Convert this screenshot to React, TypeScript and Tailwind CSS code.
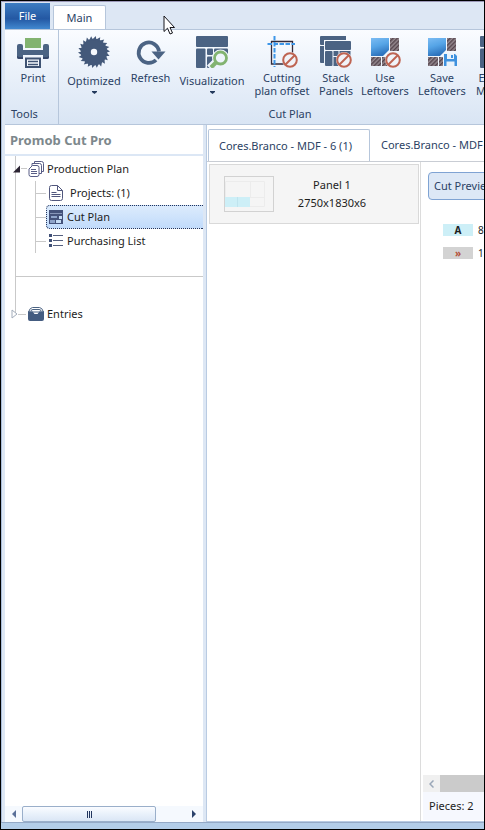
import type { ReactNode } from 'react';
import clsx from 'clsx';

interface RibbonButtonProps {
  icon: ReactNode;
  lines: string[];
  className: string;
  tall?: boolean;
  menu?: boolean;
}

function RibbonButton({ icon, lines, className, tall, menu }: RibbonButtonProps) {
  return (
    <button
      type="button"
      className={clsx('flex shrink-0 flex-col items-center pt-1.5 text-[#2b4264]', className)}
    >
      {icon}
      <span
        className={clsx(
          'flex flex-col items-center whitespace-nowrap leading-[13px]',
          tall ? 'mt-1.5' : 'mt-[3px]',
        )}
      >
        {lines.map((line) => (
          <span key={line}>{line}</span>
        ))}
      </span>
      {menu && (
        <svg className="mt-1 h-[3px] w-[5px]" viewBox="0 0 5 3" aria-hidden="true">
          <path d="M0 0h5v1L2.5 3 0 1z" fill="#22395c" />
        </svg>
      )}
    </button>
  );
}

/* Ribbon icons, all on a 32px canvas */

function PrintIcon() {
  return (
    <svg className="size-8" viewBox="0 0 32 32" aria-hidden="true">
      <path d="M8 2h16v10H8z" fill="#82b370" />
      <path
        d="M2 8h2q2 0 2 2v4h20v-4q0-2 2-2h2q2 0 2 2v11q0 2-2 2h-4v-4H6v4H2q-2 0-2-2V10q0-2 2-2z"
        fill="#4b6383"
      />
      <path d="M0 20v1q0 2 2 2h4v-2H2zM32 20v1q0 2-2 2h-4v-2h4z" fill="#36476a" />
      <path d="M6 20h20v4h-1v-3H7v3H6z" fill="#edf3fb" />
      <path d="M9 22.5h14V31H9z" fill="#f6f9fd" stroke="#3f5373" strokeWidth="2" />
      <path d="M11 25.5h10M11 28.5h10" stroke="#3f5373" strokeWidth="1.3" />
    </svg>
  );
}

const TEETH = Array.from({ length: 22 }, (_, i) => (i * 360) / 22);

function SawIcon() {
  return (
    <svg className="size-8" viewBox="0 0 32 32" aria-hidden="true">
      <circle cx="16" cy="16" r="13.2" fill="#44597a" />
      {TEETH.map((angle) => (
        <path
          key={angle}
          d="M13.5 4.5L17.8 0l.7 4.5z"
          fill="#44597a"
          transform={`rotate(${angle} 16 16)`}
        />
      ))}
      <circle cx="16" cy="16" r="3.2" fill="#f6f9fd" />
    </svg>
  );
}

function RefreshIcon() {
  return (
    <svg className="size-8" viewBox="0 0 32 32" aria-hidden="true">
      <path
        d="M21 24A10.2 10.2 0 1 1 24 15.5"
        fill="none"
        stroke="#4b6383"
        strokeWidth="3.8"
      />
      <path d="M16.5 15.5H30.500L23.500 23.500z" fill="#4b6383" />
    </svg>
  );
}

function VisualizationIcon() {
  return (
    <svg className="size-8" viewBox="0 0 32 32" aria-hidden="true">
      <g fill="#4b6383">
        <rect width="32" height="11" rx="1" />
        <rect y="12.5" width="9.5" height="19.5" rx="1" />
        <rect x="11" y="12.5" width="6" height="6.5" rx="1" />
        <rect x="18" y="12.5" width="14" height="7" rx="1" />
        <rect x="11" y="20.5" width="8" height="11.5" rx="1" />
      </g>
      <path d="M20 25.5L13.5 32" stroke="#eef4fb" strokeWidth="7" />
      <circle cx="24.5" cy="22" r="8.5" fill="#eef4fb" />
      <circle cx="24.5" cy="22" r="6" fill="#eef4fb" stroke="#82b370" strokeWidth="2.8" />
      <path d="M20.5 26L15 31.5" stroke="#82b370" strokeWidth="4" />
    </svg>
  );
}

function Forbidden() {
  return (
    <>
      <circle cx="24" cy="24" r="8" fill="#f1f5fb" />
      <circle cx="24" cy="24" r="6.8" fill="#f1f3f8" stroke="#be6452" strokeWidth="2" />
      <path d="M19.5 28.5l9-9" stroke="#be6452" strokeWidth="2" />
    </>
  );
}

function OffsetIcon() {
  return (
    <svg className="size-8" viewBox="0 0 32 32" aria-hidden="true">
      <path d="M5 5.5h21.5V28h-21V5" fill="none" stroke="#342b3a" strokeWidth="1.3" />
      <path
        d="M1.5 8H29M8.5 0v31"
        fill="none"
        stroke="#3d96e8"
        strokeWidth="2"
        strokeDasharray="4.5 1.5"
      />
      <Forbidden />
    </svg>
  );
}

function StackIcon() {
  return (
    <svg className="size-8" viewBox="0 0 32 32" aria-hidden="true">
      <g fill="#4b6383">
        <path d="M1 0h25v4H4v5H1q-1 0-1-1V1q0-1 1-1z" />
        <rect x="5" y="5" width="26" height="9" rx="1" />
        <path d="M0 10h4v17H1q-1 0-1-1z" />
        <rect x="5" y="15" width="7.5" height="15" rx="1" />
        <rect x="13.5" y="15" width="5" height="5" />
        <rect x="19.5" y="15" width="11" height="5" />
        <rect x="13.5" y="21" width="5" height="9" />
      </g>
      <Forbidden />
    </svg>
  );
}

interface PanelPartsProps {
  id: string;
}

function PanelParts({ id }: PanelPartsProps) {
  return (
    <>
      <defs>
        <linearGradient id={`${id}-blue`} x1="0" y1="0" x2="0.3" y2="1">
          <stop offset="0" stopColor="#7cbcf3" />
          <stop offset="0.5" stopColor="#55a4e6" />
          <stop offset="1" stopColor="#2e73bd" />
        </linearGradient>
        <pattern
          id={`${id}-hatch`}
          width="3"
          height="3"
          patternUnits="userSpaceOnUse"
          patternTransform="rotate(45)"
        >
          <rect width="3" height="3" fill="#94888e" />
          <rect width="1.4" height="3" fill="#54434b" />
        </pattern>
      </defs>
      <path d="M2 2h18v12l-6 6H2z" fill={`url(#${id}-blue)`} />
      <path d="M21 2h9v13h-9zM2 21h10v9H2zM13 21h8v9h-8z" fill={`url(#${id}-hatch)`} />
    </>
  );
}

function UseLeftoversIcon() {
  return (
    <svg className="size-8" viewBox="0 0 32 32" aria-hidden="true">
      <PanelParts id="use" />
      <Forbidden />
    </svg>
  );
}

function SaveLeftoversIcon() {
  return (
    <svg className="size-8" viewBox="0 0 32 32" aria-hidden="true">
      <PanelParts id="save" />
      <path d="M17 17h15v15H17z" fill="#eef4fb" />
      <path d="M18 18h11l2 2v10H18z" fill="#3e91de" />
      <path d="M21 18h7v5h-7z" fill="#e9f2fb" />
      <path d="M25 19h2v3h-2z" fill="#3e91de" />
      <path d="M20.5 25.5h8V30h-8z" fill="#e9f2fb" />
    </svg>
  );
}

function ExportIcon() {
  return (
    <svg className="size-8" viewBox="0 0 32 32" aria-hidden="true">
      <rect width="32" height="11" rx="1" fill="#4b6383" />
      <rect y="12.5" width="14" height="19.5" rx="1" fill="#4b6383" />
      <rect x="15.5" y="12.5" width="16.5" height="19.5" rx="1" fill="#4b6383" />
    </svg>
  );
}

/* Tree icons, 16px */

function PlanIcon() {
  return (
    <svg className="size-4" viewBox="0 0 16 16" aria-hidden="true">
      <g fill="#fff" stroke="#585d86">
        <path d="M6.5.5h7q2 0 2 2v8h-9z" />
        <path d="M4 2.5h7.500q2 0 2 2v8H4z" />
        <path d="M4.5 4.5H9q2 0 2 2v7q0 2-2 2H3q-2 0-2-2V8z" />
      </g>
      <path d="M3 8.5h5M3 10.5h6M3 12.5h6" stroke="#585d86" />
    </svg>
  );
}

function DocumentIcon() {
  return (
    <svg className="size-4" viewBox="0 0 16 16" aria-hidden="true">
      <path
        d="M3.5.5h6l5 5v8q0 2-2 2h-9q-2 0-2-2v-11q0-2 2-2zM9.5.5v5h5"
        fill="#fff"
        stroke="#51577d"
      />
      <path d="M3.5 7.5h5M3.5 9.5h9M3.5 11.5h9" stroke="#51577d" />
    </svg>
  );
}

function CutPlanIcon() {
  return (
    <svg className="size-4" viewBox="0 0 16 16" aria-hidden="true">
      <path d="M1 1h14v14H1z" fill="#44527a" />
      <path d="M2 4.5h12" stroke="#8796b8" />
      <path d="M3 7h6v2H3zM2 11h5v3H2z" fill="#8fa4c9" />
      <path d="M11 7h3v3h-3zM8 11h5v3H8z" fill="#c6dcf4" />
    </svg>
  );
}

function ListIcon() {
  return (
    <svg className="size-4" viewBox="0 0 16 16" aria-hidden="true">
      <path d="M1 1h3v3H1zM1 6h3v3H1zM1 11h3v3H1z" fill="#3f4f76" />
      <path d="M5 2.5h10M5 7.5h10M5 12.5h10" stroke="#55607f" />
    </svg>
  );
}

function EntriesIcon() {
  return (
    <svg className="size-4" viewBox="0 0 16 16" aria-hidden="true">
      <path d="M.5 6Q2 1.5 4.5 1.5h7Q14 1.5 15.5 6z" fill="#fff" stroke="#4b6383" />
      <path d="M3 5q0-1.500 2-1.500h6q2 0 2 1.500" fill="none" stroke="#4b6383" />
      <path d="M0 5.5h4.500l2 2.500h3l2-2.500H16V13q0 2-2 2H2q-2 0-2-2z" fill="#445c80" />
    </svg>
  );
}

interface TreeChildProps {
  icon: ReactNode;
  label: string;
  selected?: boolean;
  indent?: boolean;
}

function TreeChild({ icon, label, selected, indent }: TreeChildProps) {
  return (
    <li className="flex h-6 items-center border-l border-[#c9c9c9]">
      <span className="h-px w-2.5 bg-[#c9c9c9]" />
      <button
        type="button"
        className={clsx(
          'flex h-6 flex-1 items-center gap-[3px] border-y border-l pl-px text-left',
          selected
            ? 'rounded-l-sm border-dotted border-[#24355c] bg-linear-to-b from-[#dcebfc] to-[#c1dbfb]'
            : 'border-transparent',
        )}
      >
        {icon}
        <span className={clsx(indent && 'pl-[3px]')}>{label}</span>
      </button>
    </li>
  );
}

function Sidebar() {
  return (
    <aside className="flex w-[198px] shrink-0 flex-col bg-white">
      <h1 className="h-[31px] border-b-2 border-[#dce7f5] pl-[5px] text-[13px] leading-[30px] font-bold text-[#7d888c]">
        Promob Cut Pro
      </h1>
      <ul className="relative flex flex-col">
        <li aria-hidden="true" className="absolute top-0 left-2.5 h-[158px] w-px bg-[#c9c9c9]" />
        <li>
          <button type="button" className="relative flex h-[25px] items-center pl-2">
            <svg className="size-2" viewBox="0 0 8 8" aria-hidden="true">
              <path d="M7 0.5v7H0z" fill="#2c2433" />
            </svg>
            <span className="mr-px h-px w-1.5 bg-[#c9c9c9]" />
            <PlanIcon />
            <span className="pl-[3px]">Production Plan</span>
          </button>
          <ul className="ml-[30px] overflow-hidden">
            <TreeChild icon={<DocumentIcon />} label="Projects: (1)" indent />
            <TreeChild icon={<CutPlanIcon />} label="Cut Plan" selected />
            <TreeChild icon={<ListIcon />} label="Purchasing List" />
          </ul>
        </li>
        <li aria-hidden="true" className="mt-[23px] ml-2.5 h-px bg-[#c9c9c9]" />
        <li className="mt-[25px]">
          <button type="button" className="relative flex h-6 items-center pl-1.5">
            <svg className="h-2.5 w-[7px]" viewBox="0 0 7 10" aria-hidden="true">
              <path d="M1 1l5 4-5 4z" fill="#fff" stroke="#a3adbb" />
            </svg>
            <span className="mr-0.5 h-px w-2 bg-[#c9c9c9]" />
            <EntriesIcon />
            <span className="pl-[3px]">Entries</span>
          </button>
        </li>
      </ul>
      <div className="mt-auto flex h-4 items-center bg-[#f5f9fe]">
        <button type="button" aria-label="Scroll left" className="flex w-[17px] justify-center">
          <svg className="h-2 w-1" viewBox="0 0 4 8" aria-hidden="true">
            <path d="M4 0v8L0 4z" fill="#5a7099" />
          </svg>
        </button>
        <div className="flex h-4 w-[134px] items-center justify-center gap-px rounded-xs border border-[#9aafca] bg-linear-to-b from-[#fafcff] via-[#e9f1fb] to-[#dae6f5]">
          <span className="h-[7px] w-px bg-[#22365e]" />
          <span className="h-[7px] w-px bg-[#22365e]" />
          <span className="h-[7px] w-px bg-[#22365e]" />
        </div>
        <button type="button" aria-label="Scroll right" className="ml-auto flex w-[18px] justify-center">
          <svg className="h-2 w-1" viewBox="0 0 4 8" aria-hidden="true">
            <path d="M0 0v8l4-4z" fill="#2b426b" />
          </svg>
        </button>
      </div>
    </aside>
  );
}

function PanelList() {
  return (
    <div className="w-[214px] shrink-0 border-r border-[#dcdcdc] p-0.5 pr-px">
      <button
        type="button"
        className="flex h-[60px] w-full items-center border border-[#d9d9d9] bg-[#f5f5f5] pl-3.5 text-[#1d1d1d]"
      >
        <span className="h-9 w-[50px] shrink-0 border border-[#d2d2d2]">
          <svg className="h-[34px] w-12" viewBox="0 0 48 34" aria-hidden="true">
            <path d="M.5 4.5h39v25H.5zM.5 20.5h39M25.5 5v15" fill="none" stroke="#ececec" />
            <path d="M0 20h25v10H0z" fill="#cdeff7" />
            <path d="M12.5 20v10" stroke="#bfe4ee" />
          </svg>
        </span>
        <span className="flex flex-1 flex-col items-center pr-7 leading-[18px]">
          <span>Panel 1</span>
          <span>2750x1830x6</span>
        </span>
      </button>
    </div>
  );
}

function PreviewPane() {
  return (
    <div className="flex min-w-0 flex-1 flex-col overflow-hidden">
      <button
        type="button"
        className="mt-2.5 ml-[7px] h-7 w-[76px] shrink-0 rounded-sm border border-[#7fa3d3] bg-[#dde8f6] pl-[5px] text-left whitespace-nowrap text-[#2b4264]"
      >
        Cut Preview
      </button>
      <table className="mt-6 ml-[22px] w-14 border-separate border-spacing-0 text-[10px] leading-3">
        <tbody>
          <tr>
            <td className="w-[30px] bg-[#cdeff7] p-0 text-center font-bold">A</td>
            <td className="p-0 pl-[5px]">8</td>
          </tr>
          <tr aria-hidden="true">
            <td colSpan={2} className="h-[11px] p-0" />
          </tr>
          <tr>
            <td className="w-[30px] bg-[#d3d3d3] p-0 text-center font-bold text-[#b5523a]">»</td>
            <td className="p-0 pl-[5px]">1</td>
          </tr>
        </tbody>
      </table>
      <div className="mt-auto ml-0.5">
        <div className="flex h-[17px] bg-[#cbcbcb]">
          <button
            type="button"
            aria-label="Scroll left"
            className="flex w-[17px] items-center justify-center bg-[#f0f0f0]"
          >
            <svg className="h-2 w-[5px]" viewBox="0 0 5 8" aria-hidden="true">
              <path d="M4.5.5L1 4l3.500 3.500" fill="none" stroke="#9aa7b8" strokeWidth="1.5" />
            </svg>
          </button>
        </div>
        <p className="mb-px h-7 bg-[#f6f8fe] pl-1.5 leading-7 text-[#1d1d1d]">Pieces: 2</p>
      </div>
    </div>
  );
}

function Workspace() {
  return (
    <main className="flex min-w-0 flex-1 flex-col border-b border-l border-[#b9cbe2] bg-white">
      <div role="tablist" className="flex h-[37px] items-end overflow-hidden border-b border-[#c9cdd4] pl-px text-[#2b4264]">
        <button
          type="button"
          role="tab"
          aria-selected="true"
          className="h-8 w-[162px] shrink-0 rounded-t-xs border border-b-0 border-[#b6c6db] bg-white pl-2.5 text-left whitespace-nowrap"
        >
          Cores.Branco - MDF - 6 (1)
        </button>
        <button
          type="button"
          role="tab"
          aria-selected="false"
          className="h-8 w-[162px] shrink-0 pl-[11px] text-left whitespace-nowrap"
        >
          Cores.Branco - MDF - 9 (1)
        </button>
      </div>
      <div className="flex flex-1">
        <PanelList />
        <PreviewPane />
      </div>
    </main>
  );
}

export default function App() {
  return (
    <div className="relative flex min-h-screen flex-col overflow-hidden border border-black bg-[#dde7f4] font-['Noto_Sans',sans-serif] text-[11px] leading-4 text-[#1d1d1d]">
      <div className="flex flex-1 flex-col border-t border-l border-t-[#9c98b8] border-l-[#a9bcd8] pl-[3px]">
        <nav className="flex h-[27px] items-end gap-[3px]">
          <button
            type="button"
            className="h-[26px] w-[45px] bg-linear-to-b from-[#3d7cc2] via-[#2458a3] via-60% to-[#4289d0] text-white"
          >
            File
          </button>
          <button
            type="button"
            className="h-6 w-[53px] rounded-t-xs border border-b-0 border-[#b6c6db] bg-white text-[#2b4264]"
          >
            Main
          </button>
        </nav>
        <header className="flex h-24 overflow-hidden border-y border-[#b6c6db] bg-linear-to-b from-[#fafcff] via-[#eaf1fa] via-45% to-[#d9e5f4]">
          <section className="flex w-[54px] shrink-0 flex-col border-r border-[#b6c6db]" aria-label="Tools">
            <div className="flex h-[74px] justify-end">
              <RibbonButton icon={<PrintIcon />} lines={['Print']} className="w-[50px]" />
            </div>
            <p className="pl-1.5 leading-5 text-[#2b4264]">Tools</p>
          </section>
          <section className="flex w-[462px] shrink-0 flex-col" aria-label="Cut Plan">
            <div className="flex h-[74px] pl-1">
              <RibbonButton icon={<SawIcon />} lines={['Optimized']} className="w-[62px]" tall menu />
              <RibbonButton icon={<RefreshIcon />} lines={['Refresh']} className="w-[51px]" />
              <RibbonButton
                icon={<VisualizationIcon />}
                lines={['Visualization']}
                className="w-[72px]"
                tall
                menu
              />
              <RibbonButton icon={<OffsetIcon />} lines={['Cutting', 'plan offset']} className="w-[68px]" />
              <RibbonButton icon={<StackIcon />} lines={['Stack', 'Panels']} className="w-[40px]" />
              <RibbonButton icon={<UseLeftoversIcon />} lines={['Use', 'Leftovers']} className="w-[58px]" />
              <RibbonButton icon={<SaveLeftoversIcon />} lines={['Save', 'Leftovers']} className="w-[56px]" />
              <RibbonButton icon={<ExportIcon />} lines={['Export', 'Module']} className="w-[51px]" />
            </div>
            <p className="text-center leading-5 text-[#2b4264]">Cut Plan</p>
          </section>
        </header>
        <div className="flex flex-1 gap-[3px]">
          <Sidebar />
          <Workspace />
        </div>
      </div>
      <div className="h-[7px] border-t border-[#94a9c6] bg-[#b3cde8]" />
      <svg className="absolute top-3.5 left-[162px] h-5 w-3" viewBox="0 0 12 20" aria-hidden="true">
        <path
          d="M1 1v15.5l3.500-3.300L7 19l2.500-1L7 12.500h4.500z"
          fill="#fff"
          stroke="#16161c"
          strokeWidth="1"
        />
      </svg>
    </div>
  );
}
